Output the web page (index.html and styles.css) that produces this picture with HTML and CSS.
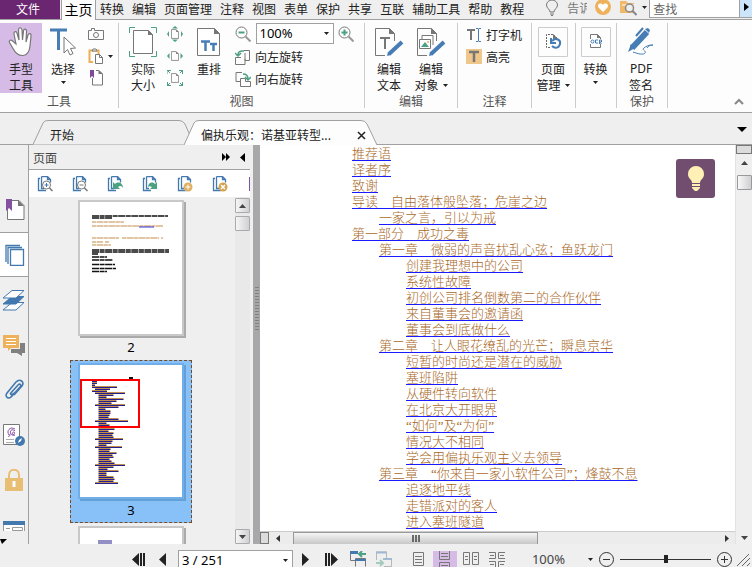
FILE: index.html
```html
<!DOCTYPE html>
<html lang="zh-CN">
<head>
<meta charset="utf-8">
<title>偏执乐观：诺基亚转型</title>
<link rel="stylesheet" href="styles.css">
</head>
<body>
<svg class="defs" width="0" height="0" aria-hidden="true">
  <symbol id="down" viewBox="0 0 5 3"><path d="M0 0h5L2.500 3z" fill="#222"/></symbol>
  <symbol id="pages" viewBox="0 0 16 16"><path d="M3 2.500H1.500v12H9M4.500.5h6l3 3v3M4.500.5v12H7M10.500.5v3h3" fill="none" stroke="#4379ae" stroke-width="1.300"/></symbol>
  <symbol id="sheet" viewBox="0 0 10 12"><path d="M.5.5h6l3 3v8h-9z" fill="#fff" stroke="#777"/><path d="M6.500.5v3h3z" fill="#777"/></symbol>
</svg>

<nav class="menu">
  <button class="file">文件</button>
  <button class="current">主页</button>
  <button>转换</button><button>编辑</button><button>页面管理</button><button>注释</button><button>视图</button><button>表单</button><button>保护</button><button>共享</button><button>互联</button><button>辅助工具</button><button>帮助</button><button>教程</button>
  <label class="tell" for="tell">
    <svg width="12" height="16" viewBox="0 0 12 16" fill="none" stroke="#777"><path d="M4 12c0-3-3.500-3.500-3.500-7A5.500 5 0 0 1 11.500 5c0 3.500-3.500 4-3.500 7zM4 14h4M5 15.500h2"/></svg>
    <input id="tell" type="text" value="告诉">
  </label>
  <button class="bare" aria-label="收藏"><svg width="16" height="16" viewBox="0 0 16 16"><circle cx="8" cy="7" r="8" fill="#eeb25c"/><path d="M8 12L3.500 7.500C1.500 4 6 2 8 5c2-3 6.500-1 4.500 2.500z" fill="#fff"/></svg></button>
  <button class="bare folder" aria-label="查找文件夹"><svg width="17" height="16" viewBox="0 0 17 16"><path d="M0 1h6l2 2h6v10H0z" fill="#efb969"/><path d="M2 5h12" stroke="#fff"/><circle cx="9.500" cy="8" r="4" fill="#eee" stroke="#888" stroke-width="1.500"/><path d="M12.500 11l4 4" stroke="#888" stroke-width="2"/></svg><svg width="5" height="3"><use href="#down"/></svg></button>
  <div class="search"><input type="text" placeholder="查找" aria-label="查找"><button aria-label="下一个"><svg width="5" height="8"><path d="M0 0l5 4-5 4z"/></svg></button></div>
</nav>

<section class="ribbon">
  <div class="group">
    <div class="tools">
      <button class="tool on"><svg width="26" height="30" viewBox="0 0 26 30"><path d="M8 17L6 7c-.5-3 2.500-3 3-1l2 7-.5-10c0-3 3-3 3.500 0l.5 10 1-9c.3-3 3.300-2 3 .5L18 15l2-7c1-2.500 3.500-1.500 3 1l-1 10c-.5 5-2 9-7 9.500-5 .3-8-3-10-7l-3.500-6c-1-2 1-3 2.500-2z" fill="#fff" stroke="#777" stroke-width="1.200"/></svg><span>手型</span><span>工具</span></button>
      <button class="tool"><svg width="26" height="30" viewBox="0 0 26 30"><path d="M0 3h17M8.500 3v20" stroke="#477db5" stroke-width="3"/><path d="M14 10v16l3.500-3.500L20 28l3-1.500-2.500-5 5-.5z" fill="#fff" stroke="#777"/></svg><span>选择</span><svg class="more" width="5" height="3"><use href="#down"/></svg></button>
      <div class="stack">
        <button aria-label="快照"><svg width="16" height="12" viewBox="0 0 16 12"><path d="M.5 2.500h3V.5h3v2h9v9H.5z" fill="none" stroke="#777"/><circle cx="8" cy="7" r="2.500" fill="none" stroke="#777"/></svg></button>
        <button aria-label="剪贴板"><svg width="16" height="16" viewBox="0 0 16 16"><path d="M5 14H1.500V2.500h9V6" fill="none" stroke="#edae54" stroke-width="2"/><path d="M4 3l1-2h3l1 2z" fill="#fff" stroke="#777"/><path d="M7.500 6.500h4l3 3v6h-7zM11.500 6.500v3h3" fill="#fff" stroke="#777"/></svg><svg width="5" height="3"><use href="#down"/></svg></button>
        <button class="mark" aria-label="书签"><svg width="14" height="16" viewBox="0 0 14 16"><path d="M2.500 8v7h10V4L9 .5H6" fill="#fff" stroke="#777"/><path d="M8.500 0v4H13z" fill="#777"/><path d="M0 0h4v8L2 6 0 8z" fill="#7d4b98"/></svg></button>
      </div>
    </div>
    <h2>工具</h2>
  </div>
  <div class="group">
    <div class="tools inset">
      <button class="tool"><svg width="28" height="30" viewBox="0 0 28 30"><path d="M.5 6V.5H6M22 .5h5.500V6M.5 24v5.500H6M22 29.500h5.500V24" fill="none" stroke="#4ba181"/><path d="M4.500 3.500h15l4 4v19h-19z" fill="#fff" stroke="#777"/><path d="M19 3v5h5z" fill="#777"/></svg><span>实际</span><span>大小</span></button>
      <div class="stack narrow">
        <button aria-label="适合页面"><svg width="16" height="16" viewBox="0 0 16 16"><g fill="#4ba181"><path d="M8 0l3 2.500H5zM8 16l3-2.500H5zM0 8l2-3v6zM16 8l-2-3v6z"/></g><use href="#sheet" x="4" y="3" width="8" height="10"/></svg></button>
        <button aria-label="适合宽度"><svg width="16" height="16" viewBox="0 0 16 16"><path d="M0 8l2.500-3v6zM16 8l-2.500-3v6z" fill="#4ba181"/><use href="#sheet" x="4" y="3" width="8" height="10"/></svg></button>
        <button aria-label="适合视区"><svg width="16" height="16" viewBox="0 0 16 16"><path d="M0 4V.5h4M12 .5h3.500V4M.5 12v3.500H4M12 15.500h3.500V12M0 0l3 3M16 0l-3 3M0 16l3-3M16 16l-3-3" fill="none" stroke="#4ba181"/><use href="#sheet" x="4" y="3" width="8" height="10"/></svg></button>
      </div>
      <button class="tool slim"><svg width="24" height="30" viewBox="0 0 24 30"><path d="M.5 1.500h17l5 5v22H.5z" fill="#fff" stroke="#777"/><path d="M17 1v6h6z" fill="#777"/><path d="M4 14.500h9M8.500 14v10M13 17h7M16.500 17v7" stroke="#477db5" stroke-width="2.500"/></svg><span>重排</span></button>
      <div class="views">
        <div class="zoomrow">
          <button aria-label="缩小"><svg width="16" height="16" viewBox="0 0 16 16" fill="none"><circle cx="6.500" cy="6.500" r="5.500" stroke="#777"/><path d="M3.500 6.500h6" stroke="#4ba181" stroke-width="2"/><path d="M10.500 10.500l5 5" stroke="#999" stroke-width="2"/></svg></button>
          <span class="combo"><select aria-label="缩放"><option>100%</option></select><svg width="5" height="3"><use href="#down"/></svg></span>
          <button aria-label="放大"><svg width="16" height="16" viewBox="0 0 16 16" fill="none"><circle cx="6.500" cy="6.500" r="5.500" stroke="#777"/><path d="M3.500 6.500h6M6.500 3.500v6" stroke="#4ba181" stroke-width="2"/><path d="M10.500 10.500l5 5" stroke="#999" stroke-width="2"/></svg></button>
        </div>
        <button class="line"><svg width="16" height="16" viewBox="0 0 16 16" fill="none"><path d="M6 8.500H.5v7H10V10M9 1.500h5.500v10H10V4" stroke="#777"/><path d="M3 6c0-3 2-4.500 6-4M0 4l3 3 3-3" stroke="#4ba181" stroke-width="1.500"/></svg>向左旋转</button>
        <button class="line"><svg width="16" height="16" viewBox="0 0 16 16" fill="none"><path d="M7 1.500H1v9h4M5.500 7.500h5v3h5v5h-10z" stroke="#777"/><path d="M13 8c0-3-2-5-5-5M10 6l3 3 3-3" stroke="#4ba181" stroke-width="1.500"/></svg>向右旋转</button>
      </div>
    </div>
    <h2>视图</h2>
  </div>
  <div class="group">
    <div class="tools inset">
      <button class="tool"><svg width="30" height="30" viewBox="0 0 30 30"><path d="M11 28.500H1.500v-27h14l5 5V14" fill="none" stroke="#777"/><path d="M15 1v6h6z" fill="#777"/><path d="M6 11h10M11 11v11" stroke="#777" stroke-width="2"/><path d="M15 27L28 15" stroke="#477db5" stroke-width="4"/><path d="M13 29l1-4 3 3z" fill="#477db5"/></svg><span>编辑</span><span>文本</span></button>
      <button class="tool"><svg width="30" height="30" viewBox="0 0 30 30"><path d="M11 28.500H1.500v-27h14l5 5V14" fill="none" stroke="#777"/><path d="M15 1v6h6z" fill="#777"/><path d="M6 12V8.500h11V18M3.500 12.500h11v9h-11z" fill="#fff" stroke="#777"/><path d="M5 20l4-5 4 5z" fill="#4ba181"/><circle cx="12" cy="15" r="1" fill="#eeb25c"/><path d="M15 27L28 15" stroke="#477db5" stroke-width="4"/><path d="M13 29l1-4 3 3z" fill="#477db5"/></svg><span>编辑</span><span>对象 <svg width="5" height="3"><use href="#down"/></svg></span></button>
    </div>
    <h2>编辑</h2>
  </div>
  <div class="group">
    <div class="tools comments">
      <button class="line"><svg width="16" height="16" viewBox="0 0 16 16" fill="none"><path d="M1 3h8M5 3v10" stroke="#777" stroke-width="2"/><path d="M10 1.500h2l.5.5.5-.5h2M12.500 2v12M10 14.500h2l.5-.5.5.5h2" stroke="#477db5"/></svg>打字机</button>
      <button class="line"><svg width="16" height="16" viewBox="0 0 16 16"><path d="M0 0h16v15H0z" fill="#efc78b"/><path d="M3 3h10M8 3v10" stroke="#777" stroke-width="2.500"/></svg>高亮</button>
    </div>
    <h2>注释</h2>
  </div>
  <div class="group">
    <div class="tools inset small">
      <button class="tool"><svg width="30" height="30" viewBox="0 0 30 30" fill="none"><path d="M.5.5h29v29H.5z" stroke="#ccc"/><path d="M12 20.500H8.500v-13h7l4 4" stroke="#666" stroke-dasharray="2 1"/><path d="M15 7v5h5z" fill="#777"/><path d="M14 14c4-4 9-1 8 3s-5 5-8 2M13 11v5h5" stroke="#477db5" stroke-width="2"/></svg><span>页面</span><span>管理 <svg width="5" height="3"><use href="#down"/></svg></span></button>
    </div>
  </div>
  <div class="group">
    <div class="tools inset small">
      <button class="tool"><svg width="30" height="30" viewBox="0 0 30 30" fill="none"><path d="M.5.5h29v29H.5z" stroke="#ccc"/><path d="M9.500 7.500h7l3 3v10h-10z" stroke="#777"/><path d="M16 7v4h4z" fill="#777"/><path d="M9 12h12v5H9z" fill="#fff"/><g stroke="#477db5"><circle cx="11.500" cy="14.500" r="1.500"/><path d="M17 13h-2.500v3H17M18.500 17v-4h2v2h-2l2 2"/></g></svg><span>转换</span><svg class="more" width="5" height="3"><use href="#down"/></svg></button>
    </div>
  </div>
  <div class="group">
    <div class="tools inset">
      <button class="tool"><svg width="26" height="30" viewBox="0 0 26 30" fill="none"><path d="M4 21L19 5" stroke="#477db5" stroke-width="6"/><path d="M0 25l3-8 4 4zM17 2l3-1 2 2-1 3z" fill="#477db5"/><path d="M8 9l7-8" stroke="#477db5" stroke-width="2"/><path d="M5 25c5 2 11 3 12 1 2-2-4-3-1-5 2-2 5-3 9-3-3 0-5 1-6 3" stroke="#477db5"/></svg><span class="latin">PDF</span><span>签名</span></button>
    </div>
    <h2>保护</h2>
  </div>
  <button class="collapse" aria-label="折叠功能区"><svg width="10" height="7"><path d="M1 6l4-4 4 4" fill="none" stroke="#888" stroke-width="2"/></svg></button>
</section>

<div class="doctabs">
  <button class="tab first"><svg width="162" height="25" viewBox="0 0 162 25"><path d="M0 24.500L10 3Q11 .5 15 .5H146Q150 .5 152 4L161 24.500" fill="#efefef" stroke="#a0a0a0"/></svg><span>开始</span></button>
  <div class="tab active"><svg width="194" height="25" viewBox="0 0 194 25"><path d="M0 25L10 3Q11 .5 15 .5H177Q181 .5 183 4L193 25" fill="#fdfdfd" stroke="#a0a0a0"/></svg><span>偏执乐观：诺基亚转型...</span><button aria-label="关闭"><svg width="9" height="9"><path d="M1 1l7 7M8 1L1 8" stroke="#222" stroke-width="1.500"/></svg></button></div>
  <button class="list" aria-label="标签列表"><svg width="10" height="5"><path d="M0 0h10L5 5z"/></svg></button>
</div>

<main>
  <nav class="side">
    <div class="sideicons">
      <button aria-label="书签"><svg width="22" height="22" viewBox="0 0 22 22"><path d="M7 1.500h9l5 5v14H4.500V9" fill="#fff" stroke="#777"/><path d="M15 1v6h6z" fill="#777"/><path d="M3 0h6v12l-3-3-3 3z" fill="#8450a0"/></svg></button>
      <button class="on" aria-label="页面"><svg width="20" height="22" viewBox="0 0 20 22"><path d="M1 18V1.500h14M3 20V3.500h14M5.500 5.500h13v16h-13z" fill="none" stroke="#4379ae" stroke-width="1.300"/></svg></button>
      <button aria-label="图层"><svg width="24" height="22" viewBox="0 0 24 22" stroke="#4379ae"><path d="M10 13.500h12L14 21H1z" fill="#fff"/><path d="M10 7.500h12L14 15H1z" fill="#4379ae"/><path d="M10 1.500h12L14 9H1z" fill="#fff"/></svg></button>
      <button aria-label="注释"><svg width="22" height="22" viewBox="0 0 22 22"><path d="M13 9h9v10h-3v3l-5-3H8v-4h9V9z" fill="#808080"/><path d="M0 1h16v13H8l-3 3v-3H0z" fill="#eeb25c"/><path d="M3 4.500h10M3 7.500h10M3 10.500h10" stroke="#fff"/></svg></button>
      <button aria-label="附件"><svg width="20" height="22" viewBox="0 0 20 22"><path d="M6 15l8-9c2-2 4 0 2 2L8 17c-3 4-8 1-5-3L12 3c4-4 9 0 6 4l-8 9M6 15c1 1 3 0 4-1" fill="none" stroke="#4379ae" stroke-width="1.600"/></svg></button>
      <button aria-label="签名"><svg width="22" height="24" viewBox="0 0 22 24"><path d="M.5 1.500h16v20H.5z" fill="#fff" stroke="#777"/><path d="M12 6c-5-3-9 2-6 6M12 8c-3-3-6 0-4 3s5-1 3-2-2 5 1 3M5 13c1 1 2 0 2-2" fill="none" stroke="#8450a0"/><path d="M3 16.500h8M3 19.500h8" stroke="#aaa"/><circle cx="17" cy="18" r="5" fill="#4379ae"/><path d="M15 20l1-3 3-2-1 3z" fill="#fff"/></svg></button>
      <button aria-label="安全"><svg width="18" height="22" viewBox="0 0 18 22"><path d="M4 10V6c0-7 10-7 10 0v4" fill="none" stroke="#e8bd74" stroke-width="2"/><path d="M0 9h18v13H0z" fill="#e8bd74"/><path d="M9 12v6" stroke="#fff" stroke-width="3"/></svg></button>
      <button aria-label="域"><svg width="22" height="22" viewBox="0 0 22 22"><path d="M.5 7.500h21v16H.5z" fill="#fff" stroke="#999"/><path d="M0 7h22v4H0z" fill="#4379ae"/><path d="M3 14.500h4M9.500 13.500h10v3h-10z" fill="none" stroke="#999"/></svg></button>
    </div>
    <button class="sidemore" aria-label="更多"><svg width="7" height="5"><path d="M0 0h7L2 5z"/></svg></button>
  </nav>

  <aside class="panel">
    <header><h1>页面</h1><button aria-label="展开"><svg width="9" height="8"><path d="M0 0l4 4-4 4zM4 0l4 4-4 4z"/></svg></button><button aria-label="收起"><svg width="5" height="9"><path d="M5 0v9L0 4.500z"/></svg></button></header>
    <div class="pagetools">
      <button aria-label="放大缩略图"><svg width="16" height="16" viewBox="0 0 16 16"><use href="#pages"/><circle cx="9.500" cy="9" r="4" fill="#fff" stroke="#777"/><path d="M12.500 12l3 3" stroke="#777" stroke-width="1.500"/><path d="M7.500 9h4M9.500 7v4" stroke="#4379ae"/></svg></button>
      <button aria-label="缩小缩略图"><svg width="16" height="16" viewBox="0 0 16 16"><use href="#pages"/><circle cx="9.500" cy="9" r="4" fill="#fff" stroke="#777"/><path d="M12.500 12l3 3" stroke="#777" stroke-width="1.500"/><path d="M7.500 9h4" stroke="#777"/></svg></button>
      <button aria-label="向左旋转"><svg width="16" height="16" viewBox="0 0 16 16"><use href="#pages"/><path d="M6 6v7h7l-2-2c2-2 4-1 5 1 0-5-5-7-8-4z" fill="#4ba181"/></svg></button>
      <button aria-label="向右旋转"><svg width="16" height="16" viewBox="0 0 16 16"><use href="#pages"/><path d="M15 6v7H8l2-2c-2-1-3-1-4 0 0-4 4-6 7-3z" fill="#4ba181"/></svg></button>
      <button aria-label="插入页面"><svg width="16" height="16" viewBox="0 0 16 16"><use href="#pages"/><circle cx="11" cy="11" r="4.500" fill="#dfae60"/><path d="M8.500 11h5M11 8.500v5" stroke="#fff"/></svg></button>
      <button aria-label="删除页面"><svg width="16" height="16" viewBox="0 0 16 16"><use href="#pages"/><circle cx="11" cy="11" r="4.500" fill="#d5a24f"/><path d="M9 9l4 4M13 9l-4 4" stroke="#fff" stroke-width="1.500"/></svg></button>
      <button aria-label="提取页面"><svg width="16" height="16"><path d="M0 1h16v14H0z" fill="#8450a0"/></svg></button>
    </div>
    <div class="thumbs">
      <div class="thumblist">
        <button class="thumb"><span class="paper"><svg width="102" height="132" viewBox="0 0 102 132" fill="none">
          <g stroke="#111" stroke-width="1.600" stroke-dasharray="7 .6 5 .5"><path d="M12 14h76M12 16h20M12 48h77M12 50h77M12 52h6M12 55h15M12 58h21M12 62.500h23M12 66.500h24M12 69.500h15"/></g>
          <g stroke="#c48d45" stroke-width="1.200" stroke-dasharray="4 .5 7 .4"><path d="M12 20h32M12 24h71M12 36h27M42 36h37M81 36h2M12 40h11M25 40h4M12 43h19"/></g><path d="M59 25h15" stroke="#3333dd"/></svg></span><span>2</span></button>
        <button class="thumb picked"><span class="paper"><svg width="102" height="132" viewBox="0 0 102 132" fill="none">
          <path d="M49 13h4" stroke="#111" stroke-width="2"/>
          <path id="toc" d="M12 16.500h5M12 18.500h5M12 20.500h3M12 22.500h25M15 24.500h15M12 26.500h15M15 28.500h30M18.500 30.500h15M18.500 32.500h8M18.500 34.500h25M18.500 36.500h18M18.500 38.500h13M15 40.500h30M18.500 42.500h20M18.500 44.500h7M18.500 46.500h12M18.500 48.500h12M18.500 50.500h11M18.500 52.500h10M18.500 54.500h20M15 56.500h33M18.500 58.500h8M18.500 60.500h11M18.500 62.500h10M18.500 64.500h16M18.500 66.500h10M18.500 68.500h15M18.500 70.500h14M18.500 72.500h15M15 74.500h28M18.500 76.500h14M18.500 78.500h13M18.500 80.500h8M15 82.500h27M18.500 84.500h12M18.500 86.500h11M18.500 88.500h18M18.500 90.500h14M18.500 92.500h15M18.500 94.500h11M18.500 96.500h13M18.500 98.500h16M15 100.500h30M18.500 102.500h15M18.500 104.500h9M18.500 106.500h20M18.500 108.500h8M18.500 110.500h8M18.500 112.500h15M18.500 114.500h16M18.500 116.500h15M15 118.500h23" stroke="currentColor"/>
          <use href="#toc" y="-1" class="ink"/>
          </svg><i class="viewport"></i></span><span>3</span></button>
        <button class="thumb" aria-label="下一页缩略图"><span class="paper"><svg width="102" height="132" viewBox="0 0 102 132"><path d="M18 13h14M18 15h14" stroke="#26208c"/></svg></span></button>
      </div>
      <div class="vbar"><button aria-label="向上"><svg width="7" height="4"><path d="M0 4l3.500-4L7 4z" fill="#444"/></svg></button><i></i><button class="end" aria-label="向下"><svg width="7" height="4"><path d="M0 0h7L3.500 4z" fill="#444"/></svg></button></div>
    </div>
  </aside>
  <div class="splitter"></div>

  <article>
    <div class="page">
      <ul class="toc">
        <li><a href="#">推荐语</a></li>
        <li><a href="#">译者序</a></li>
        <li><a href="#">致谢</a></li>
        <li><a href="#">导读　自由落体般坠落；危崖之边</a></li>
        <li class="l1"><a href="#">一家之言，引以为戒</a></li>
        <li><a href="#">第一部分　成功之毒</a></li>
        <li class="l1"><a href="#">第一章　微弱的声音扰乱心弦；鱼跃龙门</a></li>
        <li class="l2"><a href="#">创建我理想中的公司</a></li>
        <li class="l2"><a href="#">系统性故障</a></li>
        <li class="l2"><a href="#">初创公司排名倒数第二的合作伙伴</a></li>
        <li class="l2"><a href="#">来自董事会的邀请函</a></li>
        <li class="l2"><a href="#">董事会到底做什么</a></li>
        <li class="l1"><a href="#">第二章　让人眼花缭乱的光芒；瞬息京华</a></li>
        <li class="l2"><a href="#">短暂的时尚还是潜在的威胁</a></li>
        <li class="l2"><a href="#">塞班陷阱</a></li>
        <li class="l2"><a href="#">从硬件转向软件</a></li>
        <li class="l2"><a href="#">在北京大开眼界</a></li>
        <li class="l2"><a href="#">“如何”及“为何”</a></li>
        <li class="l2"><a href="#">情况大不相同</a></li>
        <li class="l2"><a href="#">学会用偏执乐观主义去领导</a></li>
        <li class="l1"><a href="#">第三章　“你来自一家小软件公司”；烽鼓不息</a></li>
        <li class="l2"><a href="#">追逐地平线</a></li>
        <li class="l2"><a href="#">走错派对的客人</a></li>
        <li class="l2"><a href="#">进入塞班隧道</a></li>
      </ul>
      <button class="tip" aria-label="提示"><svg width="16" height="26" viewBox="0 0 16 26" fill="#fff0b5"><path d="M4 17c0-4-4-4-4-9a8 8 0 0 1 16 0c0 5-4 5-4 9zM4 18h8v2H4zM4 21h8v1l-3 3H7l-3-3z"/></svg></button>
    </div>
    <div class="hbar"><i class="split"></i><button aria-label="向左"><svg width="4" height="7"><path d="M4 0v7L0 3.500z" fill="#333"/></svg></button><i class="grip"><svg width="8" height="7"><path d="M1 0v7M4 0v7M7 0v7" stroke="#444" stroke-width="1.500"/></svg></i><button class="end" aria-label="向右"><svg width="4" height="7"><path d="M0 0v7l4-3.500z" fill="#333"/></svg></button></div>
  </article>
  <div class="docbar"><i class="split"></i><button aria-label="向上"><svg width="7" height="4"><path d="M0 4l3.500-4L7 4z" fill="#444"/></svg></button><i class="grip"></i><button class="end" aria-label="向下"><svg width="7" height="4"><path d="M0 0h7L3.500 4z" fill="#444"/></svg></button></div>
</main>

<footer>
  <button aria-label="第一页"><svg width="13" height="13"><path d="M7 0v13L0 6.500zM8 0h2v13H8zM11 0h2v13h-2z" fill="#222"/></svg></button>
  <button aria-label="上一页"><svg width="7" height="13"><path d="M7 0v13L0 6.500z" fill="#222"/></svg></button>
  <span class="combo pageno"><select aria-label="页码"><option>3 / 251</option></select><svg width="5" height="3"><use href="#down"/></svg></span>
  <button aria-label="下一页"><svg width="7" height="13"><path d="M0 0v13l7-6.500z" fill="#222"/></svg></button>
  <button aria-label="最后一页"><svg width="13" height="13"><path d="M6 0v13l7-6.500zM0 0h2v13H0zM3 0h2v13H3z" fill="#222"/></svg></button>
  <button aria-label="上一视图"><svg width="17" height="16" viewBox="0 0 17 16" fill="none"><path d="M5 9.500H.5V1H8M5.500 15.500v-8h10v8" stroke="#777"/><path d="M0 1.500h8" stroke="#4379ae" stroke-width="3"/><path d="M5 9h11" stroke="#4379ae" stroke-width="2"/><path d="M16 3H9M12 0L9 3l3 3" stroke="#4ba181" stroke-width="2"/></svg></button>
  <button class="faded" aria-label="下一视图"><svg width="17" height="16" viewBox="0 0 17 16" fill="none"><path d="M.5 9V1h10v6M8 15.500h7.500V8H7" stroke="#777"/><path d="M0 1.500h11M7 8h9" stroke="#4379ae" stroke-width="2"/><path d="M0 12h7M4 9l3 3-3 3" stroke="#4ba181" stroke-width="2"/></svg></button>
  <div class="modes">
    <button aria-label="单页"><svg width="12" height="14"><path d="M.5.5h10v13H.5zM2 4.500h7M2 7.500h7M2 10.500h7" fill="none" stroke="#777"/></svg></button>
    <button class="on" aria-label="连续"><svg width="12" height="16"><path d="M.5 0v8.500h10V0M2 2.500h7M2 5.500h7M.5 16v-4.500h10V16M2 14.500h7" fill="none" stroke="#777"/></svg></button>
    <button aria-label="双页"><svg width="16" height="14"><path d="M.5.5h6v12h-6zM9.500.5h6v12h-6zM2 4.500h3M2 7.500h3M11 4.500h3M11 7.500h3" fill="none" stroke="#777"/></svg></button>
    <button aria-label="双页连续"><svg width="16" height="16"><path d="M0 1.500h6.500v6H0M16 1.500H9.500v6H16M1 4.500h4M11 4.500h4M0 10.500h6.500V16M16 10.500H9.500V16M1 13.500h4M11 13.500h4" fill="none" stroke="#777"/></svg></button>
  </div>
  <button class="percent">100%<svg width="5" height="3"><use href="#down"/></svg></button>
  <div class="zoomer">
    <button aria-label="缩小"><svg width="15" height="15" fill="none" stroke="#333"><circle cx="7.500" cy="7.500" r="7"/><path d="M4 7.500h7"/></svg></button>
    <input type="range" min="0" max="100" value="50" aria-label="缩放比例">
    <button aria-label="放大"><svg width="15" height="15" fill="none" stroke="#333"><circle cx="7.500" cy="7.500" r="7"/><path d="M4 7.500h7M7.500 4v7"/></svg></button>
  </div>
  <svg class="resize" width="14" height="13"><path d="M0 13L12 1M5 13l8-8M10 13l3-3" stroke="#666"/></svg>
</footer>
</body>
</html>
```
FILE: styles.css
```css
* { box-sizing: border-box; }
body {
  margin: 0;
  height: 100vh;
  display: flex;
  flex-direction: column;
  overflow: hidden;
  background: #efefef;
  color: #222;
  font: 12px/16px "Noto Sans CJK SC", sans-serif;
}
button {
  display: flex;
  align-items: center;
  justify-content: center;
  flex: none;
  margin: 0;
  padding: 0;
  border: 0;
  background: none;
  color: inherit;
  font: inherit;
}
input, select { margin: 0; border: 0; border-radius: 0; font: inherit; color: inherit; }
svg { flex: none; display: block; }
h1, h2 { margin: 0; font: inherit; }
.defs { position: absolute; }

/* menu */
.menu {
  display: flex;
  flex: none;
  height: 20px;
  border-bottom: 1px solid #a0a0a0;
}
.menu > button { padding: 0 4px 2px; }
.menu > .file { width: 60px; margin-right: 1px; background: #6a2670; color: #fff; padding-right: 8px; }
.menu > .current {
  width: 35px;
  height: 20px;
  border: solid #a0a0a0;
  border-width: 0 1px;
  background: #fdfdfd;
  color: #000;
  font-size: 14px;
  padding: 0 0 2px;
}
.tell { display: flex; align-items: flex-start; gap: 9px; margin-left: 18px; }
.tell input { width: 20px; height: 16px; padding: 0; background: none; color: #777; }
.menu > .bare { margin-left: 8px; padding: 0; gap: 5px; align-items: flex-start; width: 16px; }
.menu > .folder { margin-left: 9px; width: 27px; align-items: center; padding-bottom: 4px; }
.search { flex: 1; min-width: 0; display: flex; height: 18px; margin-left: 2px; border: 1px solid #a0a0a0; border-width: 0 0 1px 1px; background: #fff; }
.search input { flex: 1; min-width: 0; width: 0; padding: 0 3px; background: none; outline: 0; }
.search input::placeholder { color: #666; }
.search button { width: 13px; background: #cde5fb; border-left: 1px solid #a0a0a0; padding-bottom: 4px; }

/* ribbon */
.ribbon {
  display: flex;
  flex: none;
  height: 93px;
  padding: 3px 0 4px;
  background: #fdfdfd;
  border-bottom: 1px solid #a0a0a0;
}
.group { display: flex; flex-direction: column; flex: none; border-right: 1px solid #ccc; }
.group h2 { text-align: center; color: #555; line-height: 16px; }
.tools { display: flex; flex: none; height: 70px; }
.inset { padding-left: 3px; padding-right: 5px; }
.small { padding-left: 1px; padding-right: 2px; }
.tool { flex-direction: column; justify-content: flex-start; width: 42px; padding-top: 4px; }
.small .tool { width: 40px; }
.small:has(.more) .tool { width: 37px; }
.tool > svg:first-child { margin-bottom: 4px; }
.tool > span { display: flex; align-items: center; gap: 4px; }
.tool .more { margin-top: 4px; }
.tool.slim { width: 46px; }
.tool.on { background: #d6bbe6; }
.latin { font-family: "Noto Sans", sans-serif; }
.stack { display: flex; flex-direction: column; width: 34px; padding: 0 4px; }
.stack button { height: 22px; gap: 4px; justify-content: flex-start; }
.stack .mark { padding-left: 2px; }
.stack.narrow { width: 22px; padding: 0 3px; }
.views { display: flex; flex-direction: column; padding: 0 5px 0 3px; width: 127px; }
.zoomrow { display: flex; justify-content: space-between; height: 23px; padding-bottom: 1px; }
.combo { position: relative; display: flex; }
.combo select {
  appearance: none;
  width: 78px;
  height: 21px;
  padding: 0 3px;
  border: 1px solid #a0a0a0;
  background: #fff;
  font: 13px/19px "Noto Sans", sans-serif;
  color: #000;
}
.combo svg { position: absolute; right: 5px; top: 9px; }
.line { height: 22px; gap: 4px; justify-content: flex-start; }
.comments { flex-direction: column; padding: 1px 9px 0 8px; }
.collapse { margin-left: auto; margin-right: 8px; align-self: flex-end; height: 14px; }

/* document tabs */
.doctabs { display: flex; flex: none; align-items: flex-end; height: 32px; padding-left: 33px; border-bottom: 1px solid #a0a0a0; }
.tab { position: relative; display: flex; align-items: center; justify-content: flex-start; height: 25px; padding-left: 17px; margin-bottom: -1px; }
.tab > svg { position: absolute; left: 0; top: 0; }
.tab > span, .tab > button { position: relative; }
.tab > span { padding-top: 4px; }
.first { width: 162px; }
.active { width: 194px; margin-left: -11px; }
.active button { margin-left: auto; margin-right: 12px; padding-top: 5px; }
.list { margin: 0 5px 12px auto; }

/* work area */
main { display: flex; flex: 1; min-height: 0; }
.side { display: flex; flex-direction: column; flex: none; width: 29px; }
.sideicons { flex: 1; min-height: 0; overflow: hidden; padding-top: 42px; border-right: 1px solid #a0a0a0; }
.sideicons button { width: 28px; height: 45px; }
.sideicons .on { width: 29px; background: #fff; border: solid #a0a0a0; border-width: 1px 0; }
.sidemore { height: 13px; width: 29px; justify-content: flex-start; border-right: 1px solid #a0a0a0; padding-top: 8px; align-items: flex-start; }
.panel { display: flex; flex-direction: column; flex: none; width: 224px; padding-right: 3px; }
.panel header { display: flex; height: 25px; align-items: center; gap: 9px; padding: 0 5px 0 4px; border-bottom: 1px solid #a0a0a0; }
.panel h1 { flex: 1; color: #444; padding-top: 1px; }
.pagetools { display: flex; align-items: center; flex: none; gap: 19px; height: 27px; padding-left: 8px; background: #fff; overflow: hidden; }
.pagetools button:last-child { margin-left: 2px; }
.thumbs { display: flex; flex: 1; min-height: 0; }
.thumblist { flex: 1; overflow: hidden; padding: 0 0 0 41px; }
.thumb { flex-direction: column; justify-content: flex-start; width: 122px; height: 163px; padding-top: 3px; font: 13px/18px "Noto Sans", sans-serif; color: #000; }
.thumb > span:last-child:not(.paper) { margin-top: 2px; }
.paper { position: relative; display: block; padding: 1px; border: 1px solid #c8c8c8; outline: 1px solid #c8c8c8; outline-offset: -2px; background: #fff; box-shadow: 2px 2px 0 #aaa; }
.paper svg { display: block; color: #26208c; }
.picked { background: #88c0f8; outline: 1px dashed #7a4a20; outline-offset: -1px; }
.picked .paper { border-color: #70aeea; outline-color: #70aeea; box-shadow: 2px 2px 0 #659fd8; }
.ink { color: #c08f50; }
.viewport { position: absolute; left: 1px; top: 15px; width: 60px; height: 49px; border: 2px solid #f00; }
.vbar { display: flex; flex-direction: column; flex: none; width: 15px; padding-top: 1px; background: #e9e9e9; }
.vbar i, .vbar button { width: 15px; height: 15px; border: 1px solid #aaa; border-radius: 1px; background: linear-gradient(90deg, #f6f6f6, #d0d0d4); }
.vbar i { margin-top: 3px; }
.vbar .end { margin-top: auto; }
.splitter { display: flex; align-items: center; flex: none; width: 7px; background: #a8a8aa; }
.splitter::before { content: ""; width: 4px; height: 44px; margin: 0 auto 74px; background: radial-gradient(#555 25%, transparent 45%) 0 0 / 2px 3px; }

article { display: flex; flex-direction: column; flex: 1; min-width: 0; }
.page { position: relative; flex: 1; min-height: 0; overflow: hidden; padding: 1px 0 0 92px; background: #fff; }
.toc { margin: 0; padding: 0; list-style: none; font: 300 13px/16px "Liberation Serif", "Noto Sans CJK SC", sans-serif; white-space: nowrap; }
.toc li { display: flex; height: 16px; }
.toc a { height: 16px; color: #a9681f; text-decoration: underline 1px #1a1aff; text-underline-offset: 2px; text-decoration-skip-ink: none; }
.l1 { padding-left: 27px; }
.l2 { padding-left: 54px; }
.tip { position: absolute; right: 20px; top: 14px; width: 39px; height: 39px; border-radius: 3px; background: #714e6f; }
.hbar { display: flex; flex: none; height: 13px; border-top: 1px solid #ccc; background: #ececec; }
.split { flex: none; width: 9px; border: 1px solid #777; background: #dcdcdc; }
.hbar button { width: 17px; }
.hbar .grip { display: flex; justify-content: center; align-items: center; flex: 0 1 245px; margin-left: 7px; border: solid #999; border-width: 1px 1px 0; background: linear-gradient(#f5f5f5, #c8c8c8); }
.hbar .end { margin: 0 0 0 auto; }
.docbar { display: flex; flex-direction: column; align-items: center; flex: none; width: 17px; background: #efefef; border-left: 1px solid #e2e2e2; }
.docbar .split { width: 16px; height: 9px; }
.docbar button { height: 18px; }
.docbar .grip { width: 15px; height: 15px; margin-top: 3px; border: 1px solid #999; border-radius: 1px; background: linear-gradient(90deg, #f8f8f8, #cfcfd3); }
.docbar .end { height: 12px; margin-top: auto; }

/* status bar */
footer { display: flex; flex: none; align-items: center; height: 23px; padding: 7px 1px 0 132px; }
footer > button { margin-right: 14px; height: 16px; }
footer .combo { margin-right: 9px; margin-left: -2px; }
footer .combo select { width: 115px; height: 19px; }
footer > .combo + button { margin-right: 16px; }
footer > .combo + button + button { margin-right: 12px; }
footer > button[aria-label="上一视图"] { margin-right: 9px; }
.faded { opacity: 0.45; }
footer > .faded { margin-right: 14px; }
.modes { display: flex; align-items: center; gap: 2px; }
.modes button { width: 24px; height: 16px; }
.modes .on { background: #d6bbe6; }
footer > .percent { gap: 23px; margin: 0 6px 0 auto; font: 13px/16px "Noto Sans", sans-serif; color: #444; }
.zoomer { display: flex; align-items: center; gap: 6px; }
.zoomer input { appearance: none; width: 91px; height: 9px; background: linear-gradient(#333, #333) center / 100% 1px no-repeat; }
.zoomer input::-webkit-slider-thumb { appearance: none; width: 4px; height: 8px; background: #222; }
.resize { margin-left: 5px; }
```
